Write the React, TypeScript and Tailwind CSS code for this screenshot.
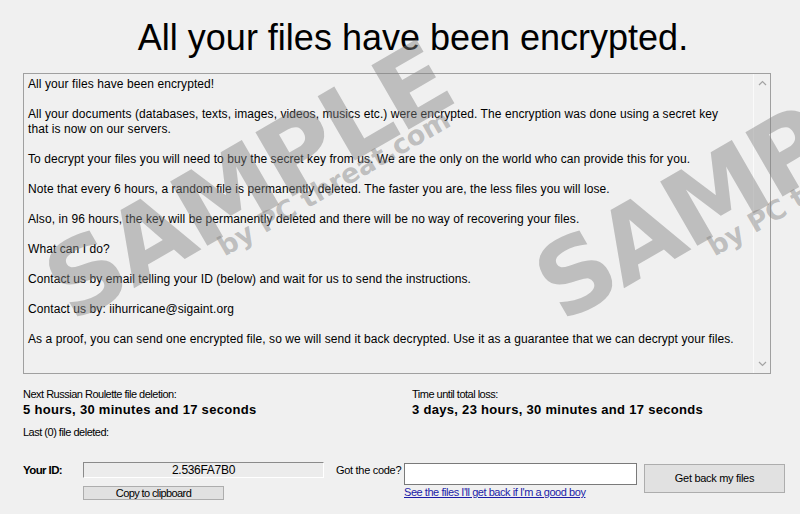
import React from 'react';

// each entry is a paragraph; inner arrays are the lines as the text box wraps them
const paragraphs: string[][] = [
    ['All your files have been encrypted!'],
    [
        'All your documents (databases, texts, images, videos, musics etc.) were encrypted. The encryption was done using a secret key',
        'that is now on our servers.',
    ],
    ['To decrypt your files you will need to buy the secret key from us. We are the only on the world who can provide this for you.'],
    ['Note that every 6 hours, a random file is permanently deleted. The faster you are, the less files you will lose.'],
    ['Also, in 96 hours, the key will be permanently deleted and there will be no way of recovering your files.'],
    ['What can I do?'],
    ['Contact us by email telling your ID (below) and wait for us to send the instructions.'],
    ['Contact us by: iihurricane@sigaint.org'],
    ['As a proof, you can send one encrypted file, so we will send it back decrypted. Use it as a guarantee that we can decrypt your files.'],
];

// grey "SAMPLE" stamp lying over the window
const Watermark: React.FC<{ className: string }> = ({ className }) => (
    <div className={`pointer-events-none absolute origin-top-left -rotate-30 whitespace-nowrap text-[rgba(128,128,128,0.45)] ${className}`}>
        <div className="font-['DejaVu_Sans',sans-serif] text-[102px] font-black leading-[100px] tracking-[-3px]">SAMPLE</div>
        <div className="-mt-[18px] ml-[165px] font-['DejaVu_Sans',sans-serif] text-[27px] font-black leading-[24px]">by PC threat.com</div>
    </div>
);

const App: React.FC = () => {
    return (
        <div className="relative h-[514px] w-[800px] overflow-hidden bg-[#f0f0f0] font-['Liberation_Sans',Arial,sans-serif] text-black">
            <h1 className="mt-[20px] pl-[26px] text-center text-[36px] leading-[36px]">All your files have been encrypted.</h1>

            {/* message box */}
            <div className="ml-[23px] mt-[17px] flex h-[301px] w-[748px] border border-[#a0a0a0] bg-[#f0f0f0]">
                <div className="flex-1 space-y-[15px] whitespace-nowrap pl-[4px] pr-[4px] pt-[3px] text-[12px] leading-[15px] tracking-[0.08px]">
                    {paragraphs.map((lines) => (
                        <p key={lines[0]}>
                            {lines.map((l) => (
                                <span key={l} className="block">
                                    {l}
                                </span>
                            ))}
                        </p>
                    ))}
                </div>
                <div className="flex w-[17px] flex-col items-center justify-between border-l border-[#fafafa] py-[6px] text-[#a3a3a3]">
                    <svg width="9" height="6" viewBox="0 0 9 6" fill="none" stroke="currentColor" strokeWidth="1.2">
                        <path d="M1 5 L4.5 1.5 L8 5" />
                    </svg>
                    <svg width="9" height="6" viewBox="0 0 9 6" fill="none" stroke="currentColor" strokeWidth="1.2">
                        <path d="M1 1 L4.5 4.5 L8 1" />
                    </svg>
                </div>
            </div>

            {/* timers */}
            <div className="mt-[14px] grid grid-cols-[389px_1fr] pl-[23px]">
                <div>
                    <div className="text-[11px] leading-[13px] tracking-[-0.5px]">Next Russian Roulette file deletion:</div>
                    <div className="mt-[1px] text-[13px] font-bold leading-[16px] tracking-[0.3px]">5 hours, 30 minutes and 17 seconds</div>
                    <div className="mt-[8px] text-[11px] leading-[13px] tracking-[-0.5px]">Last (0) file deleted:</div>
                </div>
                <div>
                    <div className="text-[11px] leading-[13px] tracking-[-0.5px]">Time until total loss:</div>
                    <div className="mt-[1px] text-[13px] font-bold leading-[16px] tracking-[0.3px]">3 days, 23 hours, 30 minutes and 17 seconds</div>
                </div>
            </div>

            {/* id / code row */}
            <div className="mt-[23px] flex items-start pl-[23px]">
                <div className="w-[60px] pt-[1px] text-[11.5px] font-bold leading-[14px] tracking-[-0.6px]">Your ID:</div>
                <div className="w-[241px]">
                    <div className="flex h-[16px] items-center justify-center border border-b-[#ffffff] border-l-[#8a8a8a] border-r-[#ffffff] border-t-[#8a8a8a] bg-[#ececec] text-[12px] leading-[14px] tracking-[-0.3px]">
                        2.536FA7B0
                    </div>
                    <button className="mt-[8px] flex h-[14px] w-[141px] items-center justify-center border border-[#adadad] bg-[#e1e1e1] text-[11px] leading-[12px] tracking-[-0.6px]">
                        Copy to clipboard
                    </button>
                </div>
                <div className="w-[80px] pl-[12px] pt-[1px] text-[11px] leading-[14px] tracking-[-0.3px]">Got the code?</div>
                <div className="w-[233px]">
                    <input type="text" className="mt-[1px] block h-[22px] w-[233px] border border-[#7a7a7a] bg-white outline-none" />
                    <a href="#" className="mt-[1px] block text-[11px] leading-[13px] tracking-[-0.45px] text-[#1c1ca8] underline">
                        See the files I'll get back if I'm a good boy
                    </a>
                </div>
                <button className="ml-[7px] mt-[2px] flex h-[29px] w-[141px] items-center justify-center border border-[#adadad] bg-[#e1e1e1] text-[11px] leading-[13px] tracking-[-0.3px]">
                    Get back my files
                </button>
            </div>

            <Watermark className="left-[30px] top-[250px]" />
            <Watermark className="left-[520px] top-[250px]" />
        </div>
    );
};

export default App;
